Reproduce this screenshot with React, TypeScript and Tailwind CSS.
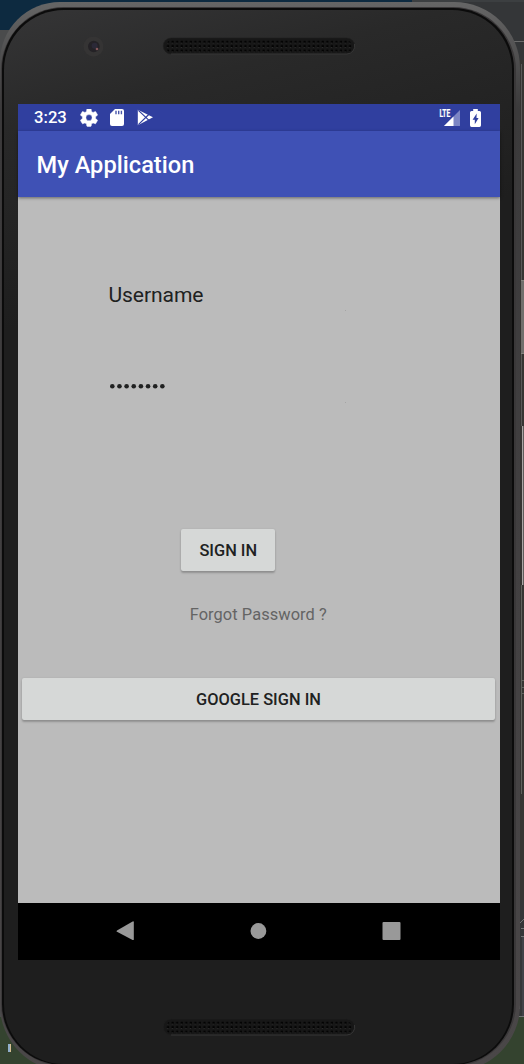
import React from "react";

function Speaker({ id }: { id: string }) {
  return (
    <svg className="block" width="194" height="18" viewBox="0 0 194 18">
      <defs>
        <pattern id={id} x="9" y="3" width="4.55" height="4.4" patternUnits="userSpaceOnUse">
          <rect width="2.2" height="2" x="0.5" y="0.7" fill="#030303" />
          <rect width="1" height="0.7" x="0.8" y="2.8" fill="#303030" />
        </pattern>
      </defs>
      <rect x="1.2" y="1" width="191.5" height="16" rx="8" fill="#171717" stroke="#202020" strokeWidth="0.6" />
      <path d="M9 17H185a8 8 0 0 0 7.5-10" fill="none" stroke="#424242" strokeWidth="0.7" />
      <rect x="4" y="3" width="186" height="13" rx="6" fill={`url(#${id})`} />
    </svg>
  );
}

function Backdrop() {
  return (
    <svg className="absolute inset-0" width="524" height="1064" viewBox="0 0 524 1064" shapeRendering="crispEdges">
      <rect width="524" height="1064" fill="#343638" />
      <rect width="412" height="30" fill="#0d2a40" />
      <rect x="412" width="112" height="2" fill="#3c3f41" />
      <rect y="30" width="30" height="990" fill="#4a4b4c" />
      <path d="M514 41h10" stroke="#6b6b6b" />
      <rect x="519" y="60" width="5" height="840" fill="#363532" />
      <path d="M521.5 64v216M521.5 354v72" stroke="#595958" />
      <rect x="521" y="280" width="3" height="74" fill="#706f6c" />
      <path d="M521 280.5h3M521 353.5h3" stroke="#85847f" />
      <rect x="522" y="426" width="1" height="159" fill="#aaa7a5" />
      <rect x="523" y="426" width="1" height="159" fill="#5f5d5b" />
      <path d="M521.5 585v209M522 680.5h2M522 687.5h2M522 693.5h2" stroke="#60625d" />
      <rect x="522" y="936" width="2" height="80" fill="#404247" />
      <path d="M519.5 936v73" stroke="#74777a" />
      <path d="m520 923 4-4m-3 9h3m-3 8h3M517 1016h7" stroke="#727476" />
      <rect y="1017" width="60" height="47" fill="#34432f" />
      <rect x="470" y="1017" width="54" height="47" fill="#34432f" />
      <rect x="8" y="1044" width="2" height="8" fill="#91afcc" />
      <rect x="10" y="1044" width="1" height="8" fill="#d5bd92" />
    </svg>
  );
}

function StatusBar() {
  return (
    <div className="flex h-[27px] items-center bg-[#303f9f] pl-4 text-white">
      <span className="w-[45.5px] text-[16.7px] leading-[27px] font-medium">3:23</span>
      <svg className="block" width="18" height="18" viewBox="1.8 2.2 20.4 20.4" fill="currentColor">
        <path
          stroke="currentColor"
          strokeWidth="0.5"
          d="M19.43 12.98c.04-.32.07-.64.07-.98s-.03-.66-.07-.98l2.11-1.65c.19-.15.24-.42.12-.64l-2-3.46c-.12-.22-.39-.3-.61-.22l-2.49 1c-.52-.4-1.08-.73-1.69-.98l-.38-2.65C14.46 2.18 14.25 2 14 2h-4c-.25 0-.46.18-.49.42l-.38 2.65c-.61.25-1.17.59-1.69.98l-2.49-1c-.23-.09-.49 0-.61.22l-2 3.46c-.13.22-.07.49.12.64l2.11 1.65c-.04.32-.07.65-.07.98s.03.66.07.98l-2.11 1.65c-.19.15-.24.42-.12.64l2 3.46c.12.22.39.3.61.22l2.49-1c.52.4 1.08.73 1.69.98l.38 2.65c.03.24.24.42.49.42h4c.25 0 .46-.18.49-.42l.38-2.65c.61-.25 1.17-.59 1.69-.98l2.49 1c.23.09.49 0 .61-.22l2-3.46c.12-.22.07-.49-.12-.64l-2.11-1.65zM12 15.5a3.5 3.5 0 1 1 0-7 3.5 3.5 0 0 1 0 7z"
        />
      </svg>
      <svg className="ml-[12.5px] block" width="14" height="17" viewBox="0 0 14 17">
        <path d="M5 0h7q2 0 2 2v13q0 2-2 2H2q-2 0-2-2V5z" fill="currentColor" />
        <path d="M6 1.8v3.4M8.7 1.8v3.4M11.4 1.8v3.4" stroke="#4a57ab" strokeWidth="1.4" />
      </svg>
      <svg className="ml-[13px] block" width="17" height="17" viewBox="0 0 17 17">
        <path d="M.8.7 16 8.3.8 16.2z" fill="currentColor" />
        <path d="m1.4 1.4 10.6 10M1.4 15.6 12 5.2" stroke="#303f9f" strokeWidth="1.2" />
      </svg>
      <div className="ml-auto flex items-center pr-[19.5px]">
        <svg className="block" width="22" height="19" viewBox="0 0 22 19">
          <path d="M21 2v16H5z" fill="#7c86c4" />
          <path d="M14.5 8.5V18H5z" fill="#fff" />
          <text x="0.4" y="9" fontSize="10.5" fontWeight="700" fontFamily="Roboto, sans-serif" fill="#fff" stroke="#fff" strokeWidth="0.2" textLength="10.8" lengthAdjust="spacingAndGlyphs">LTE</text>
        </svg>
        <svg className="ml-[9px] block" width="11" height="18" viewBox="0 0 11 18">
          <path d="M3.2 0h4.6v2h1.7Q11 2 11 3.5v12.8Q11 18 9.5 18h-8Q0 18 0 16.3V3.5Q0 2 1.5 2h1.7z" fill="#fff" />
          <path d="M6.7 4.5 2.6 10.7h2.2v4.6l3.8-6.4H6.5z" fill="#303f9f" />
        </svg>
      </div>
    </div>
  );
}

function NavigationBar() {
  return (
    <nav className="h-[57px] bg-black">
      <svg className="block" width="482" height="57" viewBox="0 0 482 57" fill="#999">
        <path d="M99 27.4 114.6 18.5q1.2-.6 1.2.7v17q0 1.3-1.2.7L99 28.8q-1.2-.7 0-1.4z" />
        <circle cx="240.4" cy="28" r="7.9" />
        <rect x="364.5" y="19" width="18" height="18" rx="1" />
      </svg>
    </nav>
  );
}

function LoginScreen() {
  return (
    <main className="h-[706px] bg-[#bbbbbb] text-[#202121]">
      <div className="pt-[84px] pl-[90.5px]">
        <div className="flex h-[31px]">
          <span className="w-[236px] text-[21.1px] leading-7 tracking-[-0.1px]">Username</span>
          <span className="mt-[29px] h-px w-px bg-[#a5a5a5]" />
        </div>
        <div className="mt-[61px] flex h-[31px]">
          <svg className="block" width="236" height="31" viewBox="0 0 236 31" fill="#202121">
            {Array.from({ length: 8 }, (_, i) => (
              <circle key={i} cx={3.3 + i * 7.15} cy="13.3" r="2.3" />
            ))}
          </svg>
          <span className="mt-[29px] h-px w-px bg-[#a5a5a5]" />
        </div>
      </div>
      <button className="mt-[124.5px] ml-[163.3px] block h-[42.5px] w-[94px] rounded-[2px] bg-[#d6d8d7] text-[16.4px] leading-[44px] font-medium shadow-[0_2px_2px_rgba(0,0,0,.22),0_0_2px_rgba(0,0,0,.1)]">
        SIGN IN
      </button>
      <div className="mt-[32px] ml-[171.7px] h-6 text-[16.4px] leading-6 tracking-[0.08px] text-[#646464]">Forgot Password ?</div>
      <button className="mt-[50.5px] ml-1 block h-[42.5px] w-[473px] rounded-[2px] bg-[#d6d8d7] text-[16.4px] leading-[44px] font-medium shadow-[0_2px_2px_rgba(0,0,0,.22),0_0_2px_rgba(0,0,0,.1)]">
        GOOGLE SIGN IN
      </button>
    </main>
  );
}

export default function App() {
  return (
    <div className="relative h-[1064px] w-[524px] overflow-hidden font-[Roboto,sans-serif]">
      <Backdrop />
      <div className="relative pt-[2px]">
        <div className="h-[1069px] w-[519.5px] rounded-[66px] rounded-tl-[60px] bg-linear-to-b from-[#666] via-[#3b3a3b] via-10% to-[#4a4748] pt-[5px] pr-[3.5px] pb-[5px] pl-[1px]">
          <div className="h-full rounded-[63px] bg-[#3a3839] pt-px pr-[2px] pb-px pl-px">
            <div className="h-full rounded-[61px] bg-[#0b0b0b] pt-[2px] pr-[2px] pb-px pl-[2px]">
              <div className="h-full rounded-[60px] bg-[linear-gradient(165deg,#353536_0%,#292929_10%,#1e1e1e_27%,#1e1e1e_100%)] pl-[14px]">
                <div className="flex h-[94px] pt-[27px] pl-[65px]">
                  <svg className="block" width="20" height="20" viewBox="0 0 20 20">
                    <circle cx="10.5" cy="9.5" r="10" fill="#353434" />
                    <circle cx="10.8" cy="9.5" r="5.8" fill="#242226" />
                    <circle cx="11.6" cy="8.7" r="3" fill="#2b2937" />
                    <circle cx="14" cy="12" r="1.3" fill="#84575a" />
                  </svg>
                  <div className="ml-[59px]"><Speaker id="earpiece" /></div>
                </div>
                <div className="h-[856px] w-[482px]">
                  <StatusBar />
                  <header className="relative h-[66px] bg-[#3f51b5] pl-[18.5px] text-[23.6px] leading-[69px] font-medium tracking-[0.03px] text-white shadow-[0_1px_3px_rgba(0,0,0,.45)]">My Application</header>
                  <LoginScreen />
                  <NavigationBar />
                </div>
                <div className="pt-[58px] pl-[144px]"><Speaker id="speaker" /></div>
              </div>
            </div>
          </div>
        </div>
      </div>
    </div>
  );
}
